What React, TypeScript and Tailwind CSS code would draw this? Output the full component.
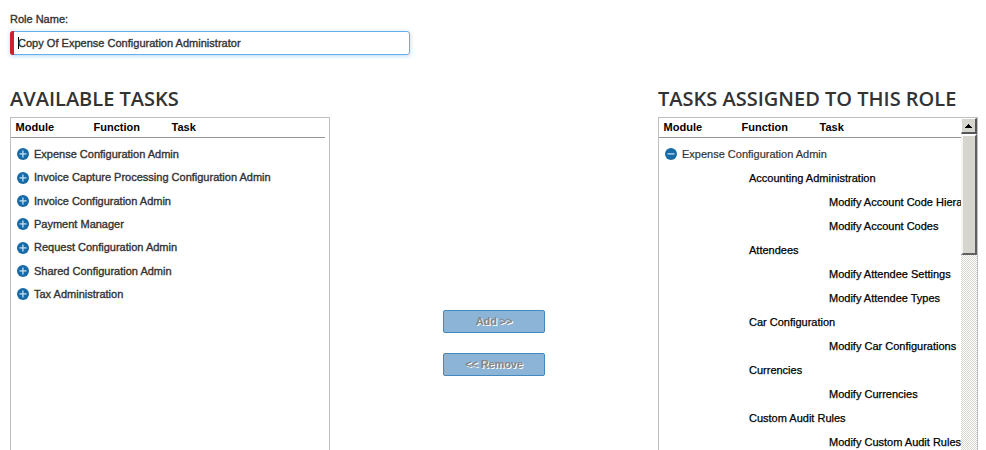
const modules = [
  'Expense Configuration Admin',
  'Invoice Capture Processing Configuration Admin',
  'Invoice Configuration Admin',
  'Payment Manager',
  'Request Configuration Admin',
  'Shared Configuration Admin',
  'Tax Administration',
];

const groups = [
  { name: 'Accounting Administration', tasks: ['Modify Account Code Hierarchies', 'Modify Account Codes'] },
  { name: 'Attendees', tasks: ['Modify Attendee Settings', 'Modify Attendee Types'] },
  { name: 'Car Configuration', tasks: ['Modify Car Configurations'] },
  { name: 'Currencies', tasks: ['Modify Currencies'] },
  { name: 'Custom Audit Rules', tasks: ['Modify Custom Audit Rules'] },
];

function Toggle({ open = false }: { open?: boolean }) {
  return (
    <svg width="12" height="12" viewBox="0 0 12 12" className="shrink-0">
      <circle cx="6" cy="6" r="6" fill="#176aa8" />
      <rect x="2.5" y="5.25" width="7" height="1.3" fill="#c9e0f0" />
      {!open && <rect x="5.25" y="2.5" width="1.3" height="7" fill="#c9e0f0" />}
    </svg>
  );
}

function Header() {
  return (
    <div className="flex h-5 border-b border-[#939399] pl-[4.6px] text-[11px] leading-[19px] font-bold text-black">
      <span className="w-[78px]">Module</span>
      <span className="w-[78px]">Function</span>
      <span>Task</span>
    </div>
  );
}

function ScrollBar() {
  return (
    <div className="flex w-4 shrink-0 flex-col bg-[repeating-conic-gradient(#d6d5ce_0_25%,#ffffff_0_50%)] bg-[length:2px_2px]">
      <div className="flex h-4 items-center justify-center border-t border-r-2 border-b-2 border-l border-t-white border-r-[#55555a] border-b-[#55555a] border-l-white bg-[#d6d5ce]">
        <svg width="7" height="4" viewBox="0 0 7 4" shapeRendering="crispEdges">
          <path d="M3 0h1v1h1v1h1v1h1v1H0V3h1V2h1V1h1z" fill="#000" />
        </svg>
      </div>
      <div className="h-[121px] border-t-2 border-r-2 border-b-2 border-l-2 border-t-white border-r-[#606062] border-b-[#606062] border-l-[#f4f4f0] bg-[#d6d5ce]" />
    </div>
  );
}

function ActionButton({ label }: { label: string }) {
  return (
    <button className="h-[23px] w-[102px] rounded-[2px] border border-[#4189c0] bg-[#8cb4d6] text-[11px] leading-none font-bold tracking-[-0.15px] text-[#868686] [text-shadow:1px_1px_0_#fff]">
      {label}
    </button>
  );
}

export default function App() {
  return (
    <main className="h-[450px] w-[986px] overflow-hidden bg-white pl-[10px] font-['Liberation_Sans',Arial,sans-serif] text-[11px] text-[#333]">
      <div className="h-[31px] pt-3 leading-[15px] [-webkit-text-stroke:0.35px]">Role Name:</div>
      <div className="flex h-6 w-[400px] rounded-[3px] border border-[#66afe9] shadow-[0_1px_4px_rgba(82,168,236,0.45)]">
        <div className="-my-px -ml-px w-1 rounded-l-[3px] bg-[#cf202f]" />
        <div className="mt-[5px] ml-1 h-3 w-px bg-black" />
        <span className="-ml-px leading-[23px] tracking-[0.015px] [-webkit-text-stroke:0.35px]">Copy Of Expense Configuration Administrator</span>
      </div>
      <div className="flex h-[395px] pt-8">
        <section className="flex w-[320px] flex-col">
          <h2 className="h-[30px] font-['Open_Sans',sans-serif] text-[20px] leading-[24px] font-semibold whitespace-nowrap text-[#333]">AVAILABLE TASKS</h2>
          <div className="flex-1 border border-b-0 border-[#c0c0c0]">
            <div className="mr-1"><Header /></div>
            <ul className="pt-[4.75px] pl-[6px]">
              {modules.map((m) => (
                <li key={m} className="flex h-[23.35px] items-center gap-[5px] leading-[15px] [-webkit-text-stroke:0.35px]">
                  <Toggle />
                  <span>{m}</span>
                </li>
              ))}
            </ul>
          </div>
        </section>
        <div className="flex w-[328px] flex-col items-center gap-5 pt-[223px]">
          <ActionButton label="Add >>" />
          <ActionButton label="<< Remove" />
        </div>
        <section className="flex w-[320px] flex-col">
          <h2 className="h-[30px] font-['Open_Sans',sans-serif] text-[20px] leading-[24px] font-semibold whitespace-nowrap text-[#333]">TASKS ASSIGNED TO THIS ROLE</h2>
          <div className="flex min-h-0 flex-1 border border-b-0 border-[#c0c0c0]">
            <div className="min-w-0 flex-1 overflow-hidden whitespace-nowrap">
              <Header />
              <div className="mt-1 flex h-6 items-center gap-[5px] pl-[6px] [-webkit-text-stroke:0.2px]">
                <Toggle open />
                <span>Expense Configuration Admin</span>
              </div>
              {groups.map((g) => (
                <div key={g.name} className="pl-[90px] leading-6 text-black [-webkit-text-stroke:0.25px]">
                  <div>{g.name}</div>
                  {g.tasks.map((t) => (
                    <div key={t} className="pl-20">{t}</div>
                  ))}
                </div>
              ))}
            </div>
            <ScrollBar />
          </div>
        </section>
      </div>
    </main>
  );
}
